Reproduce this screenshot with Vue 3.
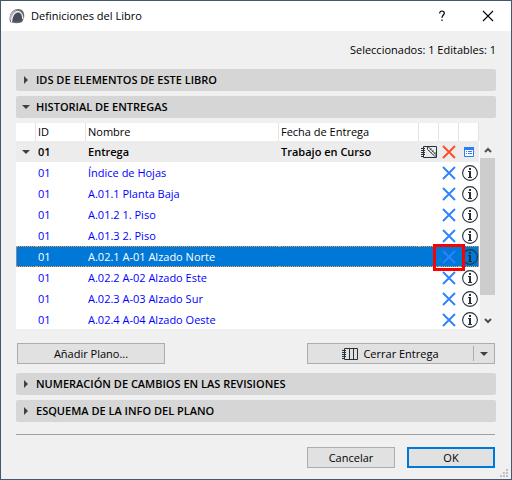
<script setup>
import { ref } from 'vue'

const rows = [
  'Índice de Hojas',
  'A.01.1 Planta Baja',
  'A.01.2 1. Piso',
  'A.01.3 2. Piso',
  'A.02.1 A-01 Alzado Norte',
  'A.02.2 A-02 Alzado Este',
  'A.02.3 A-03 Alzado Sur',
  'A.02.4 A-04 Alzado Oeste',
]
const selected = ref(4)
</script>

<template>
  <main class="dialog">
    <header class="titlebar">
      <svg class="logo" viewBox="0 0 16 16" aria-hidden="true">
        <path d="M1 14C-.5 7 3 1 9 1c5 0 7 4 6 9l-2 4c-3 1.500-7 1.500-10 .5z" fill="#666873" />
        <path d="M.5 11C1 5 4 1.500 9 1.500 5 3 3 6 2.500 13z" fill="#b5b7c0" />
        <path d="M3 13.500C3.500 8 6.500 4.500 9.500 5c3 .5 4 4 3.500 8.500" fill="#4a4c57" />
        <path d="M2.500 14C2.500 8.500 5.500 3.500 9 3.500c3 0 4.800 3.500 4.800 7.500" fill="none" stroke="#f1f2f5" stroke-width="1.300" />
      </svg>
      <h1>Definiciones del Libro</h1>
      <button class="caption" aria-label="Ayuda">
        <svg width="12" height="12" viewBox="0 0 12 12"><path d="M3.700 3.500C3.700 1.800 4.700 1 6 1s2.300.8 2.300 2.200C8.300 5 6 5.100 6 7.800M6 9.500v1.500" fill="none" stroke="#000" stroke-width="1.200" /></svg>
      </button>
      <button class="caption" aria-label="Cerrar">
        <svg width="12" height="12" viewBox="0 0 12 12"><path d="M1 1l10 10M11 1L1 11" stroke="#000" stroke-width="1.100" /></svg>
      </button>
    </header>

    <div class="body">
      <p class="count">Seleccionados: 1 Editables: 1</p>

      <button class="section"><i class="tri right"></i>IDS DE ELEMENTOS DE ESTE LIBRO</button>
      <button class="section"><i class="tri down"></i>HISTORIAL DE ENTREGAS</button>

      <div class="list">
        <div class="viewport">
          <table>
            <colgroup>
              <col class="c-icon" /><col class="c-id" /><col /><col class="c-date" />
              <col class="c-icon" /><col class="c-icon" /><col class="c-icon" />
            </colgroup>
            <thead>
              <tr><th></th><th>ID</th><th>Nombre</th><th>Fecha de Entrega</th><th></th><th></th><th></th></tr>
            </thead>
            <tbody>
              <tr class="group">
                <td><button class="icon" aria-label="Contraer"><i class="tri down"></i></button></td>
                <td>01</td>
                <td>Entrega</td>
                <td>Trabajo en Curso</td>
                <td>
                  <svg class="glyph" width="16" height="12" viewBox="0 0 16 12" fill="none" stroke="#26323a">
                    <path d="M2.500.500h13v11h-13zM0 2.500h4M0 4.500h4M0 6.500h4M0 8.500h4M0 10.500h2" />
                    <path d="M6.500 1v2.500l7 6.500h2M7.500 1l8 8" stroke-width=".9" />
                    <path d="M8.500 4.500l2-2M10.500 6.500l2-2M12.500 8.500l2-2" stroke-width=".8" />
                  </svg>
                </td>
                <td>
                  <button class="icon" aria-label="Eliminar entrega">
                    <svg width="14" height="14" viewBox="0 0 14 14"><path d="M1 1l12 12M13 1L1 13" stroke="#ff4a26" stroke-width="1.900" /></svg>
                  </button>
                </td>
                <td>
                  <button class="icon" aria-label="Detalles">
                    <svg width="10" height="10" viewBox="0 0 10 10"><path d="M.5.500h9v9h-9z" fill="#fff" stroke="#2b7cf6" /><path d="M0 0h10v3H0zM2 4h1v1H2zM4 4h4v1H4zM2 6h1v1H2zM4 6h4v1H4z" fill="#2b7cf6" /></svg>
                  </button>
                </td>
              </tr>
              <tr v-for="(name, i) in rows" :key="name" :class="{ selected: i === selected }" @click="selected = i">
                <td></td>
                <td>01</td>
                <td>{{ name }}</td>
                <td></td>
                <td></td>
                <td>
                  <button class="icon" :aria-label="'Quitar ' + name">
                    <svg width="14" height="14" viewBox="0 0 14 14"><path d="M1 1l12 12M13 1L1 13" stroke="#2d83ff" stroke-width="1.900" /></svg>
                  </button>
                  <span v-if="i === selected" class="marker"></span>
                </td>
                <td>
                  <button class="icon info" :aria-label="'Información de ' + name">
                    <svg width="16" height="16" viewBox="0 0 16 16"><circle cx="8" cy="8" r="7.400" fill="none" stroke="#26323a" stroke-width="1.100" /><path d="M7 3h2v2H7zM6 6h3v6h1v1H6v-1h1V7H6z" fill="#26323a" /></svg>
                  </button>
                </td>
              </tr>
            </tbody>
          </table>
        </div>
        <div class="scrollbar">
          <button aria-label="Subir"><svg width="8" height="6" viewBox="0 0 8 6"><path d="M1 5l3-3 3 3" fill="none" stroke="#505050" stroke-width="2" /></svg></button>
          <div class="track"><div class="thumb"></div></div>
          <button aria-label="Bajar"><svg width="8" height="6" viewBox="0 0 8 6"><path d="M1 1l3 3 3-3" fill="none" stroke="#505050" stroke-width="2" /></svg></button>
        </div>
      </div>

      <div class="actions">
        <button class="btn add">Añadir Plano...</button>
        <div class="split">
          <button class="split-main">
            <svg width="16" height="12" viewBox="0 0 16 12" fill="none" stroke="#26323a"><path d="M2.500.500h13v11h-13zM7.500 1v10M11.500 1v10M0 2.500h4M0 4.500h4M0 6.500h4M0 8.500h4M0 10.500h2" /></svg>
            Cerrar Entrega
          </button>
          <button class="split-arrow" aria-label="Más opciones"><i class="tri down"></i></button>
        </div>
      </div>

      <button class="section"><i class="tri right"></i>NUMERACIÓN DE CAMBIOS EN LAS REVISIONES</button>
      <button class="section"><i class="tri right"></i>ESQUEMA DE LA INFO DEL PLANO</button>

      <footer>
        <button class="btn">Cancelar</button>
        <button class="btn primary">OK</button>
      </footer>
    </div>
    <svg class="grip" width="8" height="8" viewBox="0 0 8 8"><path d="M6 0h2v2H6zM3 3h2v2H3zM6 3h2v2H6zM0 6h2v2H0zM3 6h2v2H3zM6 6h2v2H6z" fill="#bfbfbf" /></svg>
  </main>
</template>

<style>
body { margin: 0; }
</style>

<style scoped>
* { box-sizing: border-box; }
.dialog {
  position: relative;
  min-height: 100vh;
  border: 1px solid #43586c;
  background: #f0f0f0;
  color: #000;
  font: 11px/16px "Open Sans", "Noto Sans", sans-serif;
}
button { font: inherit; color: inherit; margin: 0; padding: 0; border: 0; background: none; }
svg { display: block; flex: none; }
.titlebar { display: flex; align-items: center; height: 30px; padding-left: 8px; background: #fff; }
.logo { width: 16px; height: 16px; margin-right: 6px; }
h1 { flex: 1; margin: 0; font-size: 11px; line-height: 16px; font-weight: 400; }
.caption { display: flex; align-items: center; justify-content: center; width: 46px; height: 30px; }
.body { padding: 11px 15px 11px; }
.count { margin: 0 0 11px; text-align: right; }
.section {
  display: flex;
  align-items: center;
  width: 100%;
  height: 22px;
  margin-bottom: 5px;
  padding-left: 8px;
  border-radius: 2px;
  background: #d6d6d6;
  font-weight: 600;
  text-align: left;
}
.tri { display: block; flex: none; border: 4px solid transparent; }
.tri.down { border-top-color: #404040; border-bottom: 0; }
.tri.right { border-left-color: #404040; border-right: 0; }
.section .tri.right { margin-right: 8px; }
.section .tri.down { margin-left: -2px; margin-right: 6px; }
.list { display: flex; height: 206px; padding-right: 1px; }
.viewport { flex: 1; overflow: hidden; background: linear-gradient(#f0f0f0 18px, #fff 18px); padding-right: 1px; }
table { width: 100%; border-collapse: separate; border-spacing: 0; table-layout: fixed; background: #fff; }
.c-icon { width: 20px; }
.c-id { width: 50px; }
.c-date { width: 140px; }
th, td { padding: 0 0 0 2px; text-align: left; white-space: nowrap; }
th { height: 18px; font-weight: 400; box-shadow: inset -1px 0 #e3e3e3; }
td { position: relative; height: 21px; color: #00f; }
td:nth-child(n + 5), td:first-child { padding: 0; }
.group td { background: #ececec; color: #000; font-weight: 600; }
.selected td {
  border: 0 dotted #ff9a3c;
  border-width: 1px 0;
  background: #0078d7;
  color: #fff;
}
.selected td:first-child { box-shadow: inset 1px 0 #8089a0; }
.selected td:last-child { box-shadow: inset -1px 0 #8089a0; }
.icon { display: flex; align-items: center; justify-content: center; width: 20px; height: 18px; }
.info { padding-left: 2px; }
.glyph { margin-left: 2px; }
.marker { position: absolute; z-index: 1; left: -6px; top: -3px; width: 32px; height: 27px; border: 3px solid #f00; pointer-events: none; }
.scrollbar { display: flex; flex-direction: column; width: 15px; padding-top: 18px; }
.scrollbar button { display: flex; align-items: center; justify-content: center; height: 17px; }
.track { flex: 1; }
.thumb { height: 89%; background: #cdcdcd; }
.actions { display: flex; justify-content: space-between; padding: 14px 1px 9px; }
.btn { width: 88px; height: 21px; border: 1px solid #adadad; background: #e1e1e1; line-height: 19px; }
.add { width: 148px; }
.split { display: flex; align-items: center; width: 188px; height: 21px; border: 1px solid #adadad; background: #e1e1e1; }
.split-main { display: flex; flex: 1; align-items: center; justify-content: center; gap: 5px; height: 15px; border-right: 1px solid #adadad; }
.split-arrow { display: flex; align-items: center; justify-content: center; width: 20px; height: 19px; }
footer { display: flex; justify-content: flex-end; gap: 12px; margin: 12px 1px 0 0; padding-top: 12px; border-top: 1px solid #a0a0a0; }
.primary { border: 2px solid #0078d7; line-height: 17px; }
.grip { position: absolute; right: 3px; bottom: 2px; }
</style>
